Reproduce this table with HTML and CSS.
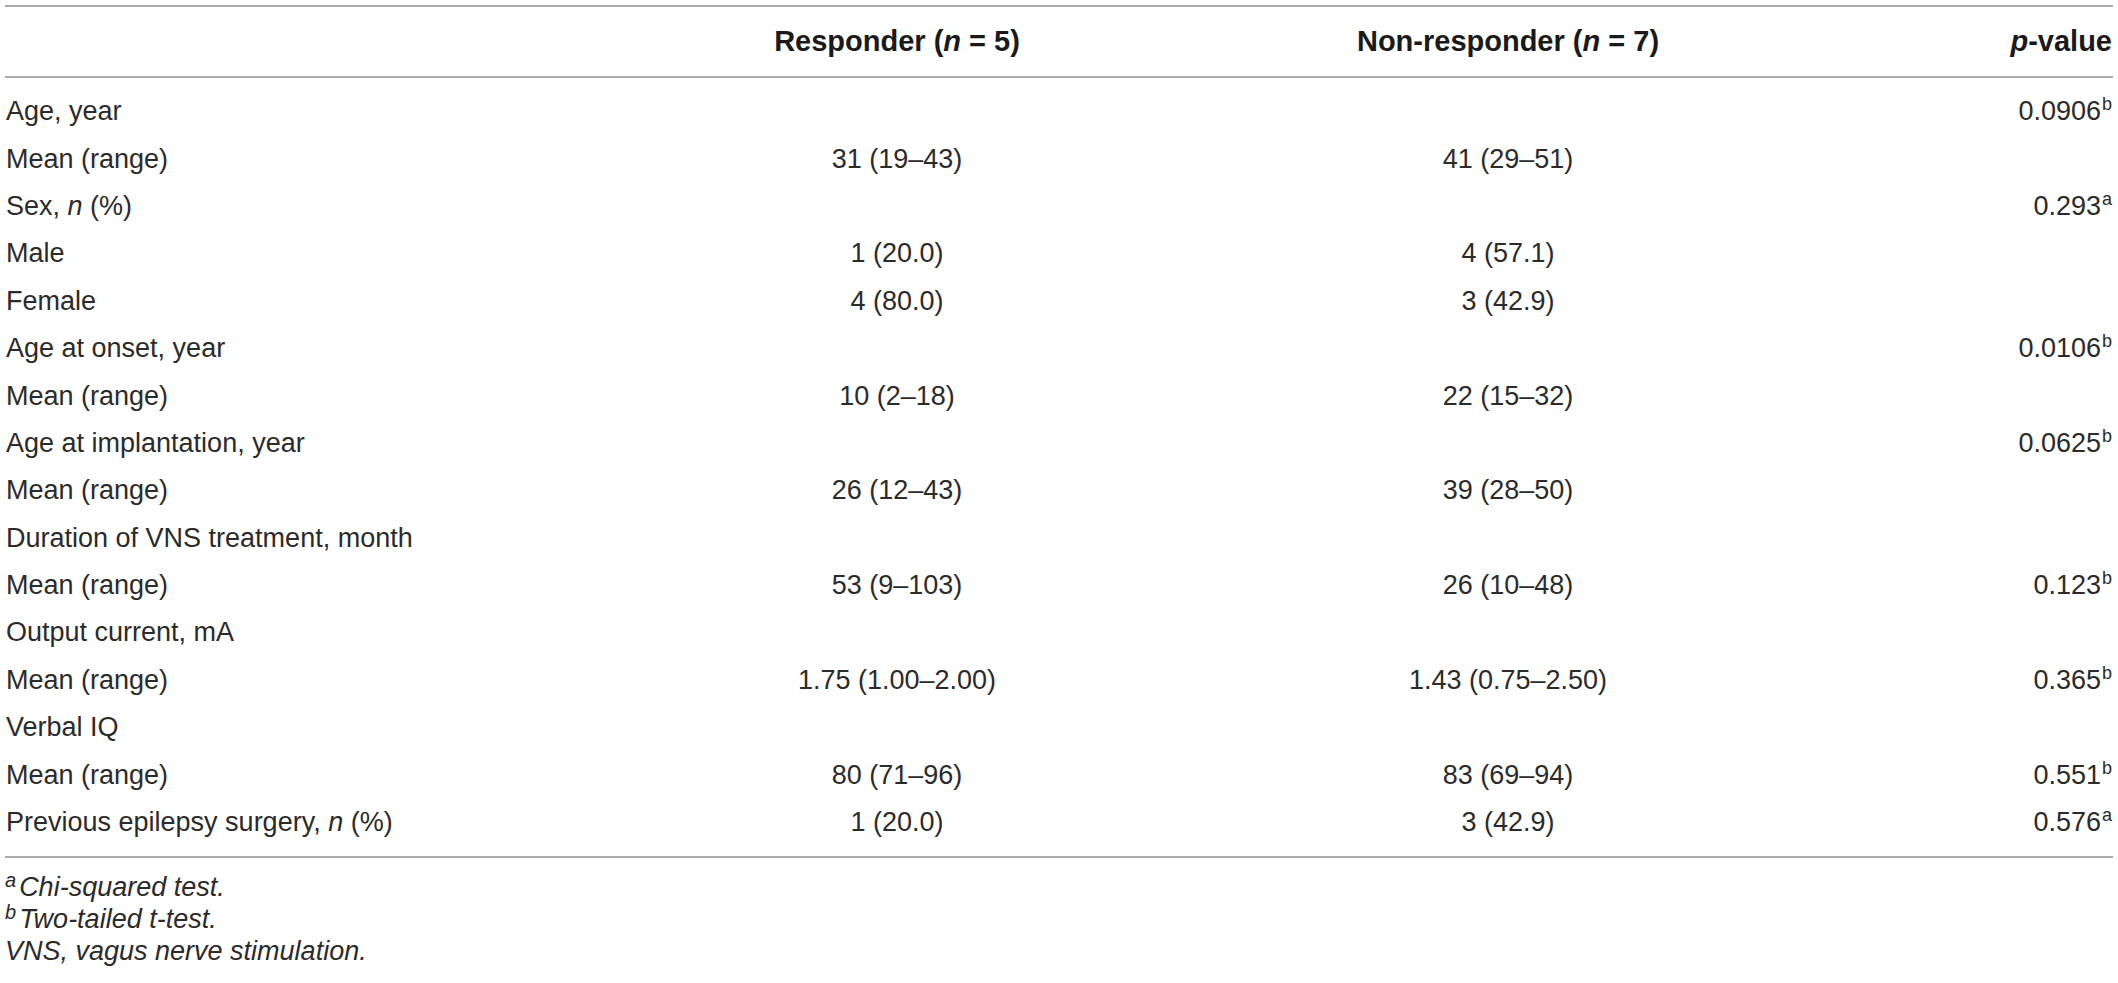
FILE: index.html
```html
<!DOCTYPE html>
<html lang="en">
<head>
<meta charset="utf-8">
<title>Responder vs Non-responder</title>
<link rel="stylesheet" href="styles.css">
</head>
<body>
<div class="table">
  <div class="row head">
    <div class="c1"></div>
    <div class="c2">Responder (<i>n</i> = 5)</div>
    <div class="c3">Non-responder (<i>n</i> = 7)</div>
    <div class="c4"><i>p</i>-value</div>
  </div>
  <div class="body">
    <div class="row"><div class="c1">Age, year</div><div class="c2"></div><div class="c3"></div><div class="c4">0.0906<sup class="sup">b</sup></div></div>
    <div class="row"><div class="c1">Mean (range)</div><div class="c2">31 (19–43)</div><div class="c3">41 (29–51)</div><div class="c4"></div></div>
    <div class="row"><div class="c1">Sex, <i>n</i> (%)</div><div class="c2"></div><div class="c3"></div><div class="c4">0.293<sup class="sup">a</sup></div></div>
    <div class="row"><div class="c1">Male</div><div class="c2">1 (20.0)</div><div class="c3">4 (57.1)</div><div class="c4"></div></div>
    <div class="row"><div class="c1">Female</div><div class="c2">4 (80.0)</div><div class="c3">3 (42.9)</div><div class="c4"></div></div>
    <div class="row"><div class="c1">Age at onset, year</div><div class="c2"></div><div class="c3"></div><div class="c4">0.0106<sup class="sup">b</sup></div></div>
    <div class="row"><div class="c1">Mean (range)</div><div class="c2">10 (2–18)</div><div class="c3">22 (15–32)</div><div class="c4"></div></div>
    <div class="row"><div class="c1">Age at implantation, year</div><div class="c2"></div><div class="c3"></div><div class="c4">0.0625<sup class="sup">b</sup></div></div>
    <div class="row"><div class="c1">Mean (range)</div><div class="c2">26 (12–43)</div><div class="c3">39 (28–50)</div><div class="c4"></div></div>
    <div class="row"><div class="c1">Duration of VNS treatment, month</div><div class="c2"></div><div class="c3"></div><div class="c4"></div></div>
    <div class="row"><div class="c1">Mean (range)</div><div class="c2">53 (9–103)</div><div class="c3">26 (10–48)</div><div class="c4">0.123<sup class="sup">b</sup></div></div>
    <div class="row"><div class="c1">Output current, mA</div><div class="c2"></div><div class="c3"></div><div class="c4"></div></div>
    <div class="row"><div class="c1">Mean (range)</div><div class="c2">1.75 (1.00–2.00)</div><div class="c3">1.43 (0.75–2.50)</div><div class="c4">0.365<sup class="sup">b</sup></div></div>
    <div class="row"><div class="c1">Verbal IQ</div><div class="c2"></div><div class="c3"></div><div class="c4"></div></div>
    <div class="row"><div class="c1">Mean (range)</div><div class="c2">80 (71–96)</div><div class="c3">83 (69–94)</div><div class="c4">0.551<sup class="sup">b</sup></div></div>
    <div class="row"><div class="c1">Previous epilepsy surgery, <i>n</i> (%)</div><div class="c2">1 (20.0)</div><div class="c3">3 (42.9)</div><div class="c4">0.576<sup class="sup">a</sup></div></div>
  </div>
</div>
<div class="notes">
  <p><sup class="fsup">a</sup>Chi-squared test.</p>
  <p><sup class="fsup">b</sup>Two-tailed t-test.</p>
  <p>VNS, vagus nerve stimulation.</p>
</div>
</body>
</html>
```
FILE: styles.css
```css
html, body {
  margin: 0;
  padding: 0;
  background: #ffffff;
}
body {
  font-family: "Liberation Sans", Arial, sans-serif;
  font-size: 27px;
  color: #2b2b2b;
  width: 2118px;
}
.table {
  margin: 5px 5px 0 5px;
  border-top: 2px solid #ababab;
  border-bottom: 2px solid #ababab;
}
.row {
  display: grid;
  grid-template-columns: 600px 584px 638px 1fr;
  align-items: center;
  height: 47.4px;
}
.head {
  height: 69px;
  font-size: 29px;
  font-weight: bold;
  color: #1a1a1a;
  border-bottom: 2px solid #ababab;
}
.body {
  padding: 10px 0;
}
.c1 {
  padding-left: 1px;
  white-space: nowrap;
}
.c2, .c3 {
  text-align: center;
  white-space: nowrap;
}
.c4 {
  text-align: right;
  padding-right: 1px;
  white-space: nowrap;
}
.sup {
  font-size: 18px;
  line-height: 0;
  vertical-align: 10px;
  margin-left: 1px;
}
.notes {
  margin: 0 5px;
  padding-top: 13px;
  font-style: italic;
  line-height: 32px;
}
.notes p {
  margin: 0;
}
.fsup {
  font-size: 20px;
  line-height: 0;
  vertical-align: 9px;
  margin-right: 3px;
}
```
